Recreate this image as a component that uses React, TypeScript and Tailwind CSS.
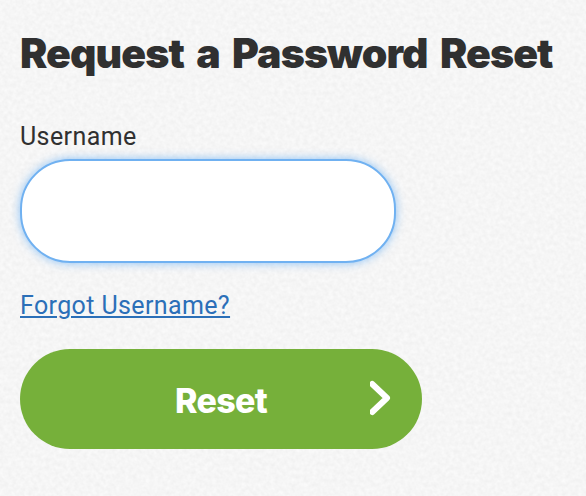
import { useState } from "react";

function PaperTexture() {
  return (
    <svg className="absolute inset-0 h-full w-full pointer-events-none" aria-hidden="true">
      <filter id="paper" x="0" y="0" width="100%" height="100%" colorInterpolationFilters="sRGB">
        <feTurbulence type="fractalNoise" baseFrequency="0.24" numOctaves="2" seed="7" />
        <feColorMatrix
          type="matrix"
          values="0.055 0 0 0 0.935  0.055 0 0 0 0.935  0.055 0 0 0 0.935  0 0 0 0 1"
        />
      </filter>
      <rect width="100%" height="100%" filter="url(#paper)" />
    </svg>
  );
}

export default function App() {
  const [username, setUsername] = useState("");

  return (
    <main className="relative h-screen overflow-hidden bg-[#f6f6f6] font-['Inter',sans-serif] text-[#303030]">
      <PaperTexture />

      <form className="relative flex flex-col items-start pl-5 pt-7" onSubmit={(e) => e.preventDefault()}>
        <h1 className="h-[52px] whitespace-nowrap text-[41px] font-black leading-[51px] tracking-[-0.9px] [word-spacing:5px]">
          Request a Password Reset
        </h1>

        <label
          htmlFor="username"
          className="mt-[41px] h-8 whitespace-nowrap font-['Roboto',sans-serif] text-[25px] leading-8 tracking-[0.4px]"
        >
          Username
        </label>
        <input
          id="username"
          type="text"
          value={username}
          onChange={(e) => setUsername(e.target.value)}
          className="mt-[6px] h-[104px] w-[376px] rounded-[50px] border-2 border-[#70b1f1] bg-white px-10 text-2xl shadow-[0_0_10px_rgba(90,168,245,0.7)] outline-none"
        />

        <a
          href="#"
          className="mt-[27px] h-8 whitespace-nowrap font-['Roboto',sans-serif] text-[25px] leading-8 tracking-[0.38px] text-[#2b6fb8] underline decoration-2 underline-offset-2"
        >
          Forgot Username?
        </a>

        <button
          type="submit"
          className="mt-[27px] flex h-[100px] w-[402px] items-center justify-end rounded-full bg-[#76b03a] pr-[30px] text-white"
        >
          <span className="mr-[103px] mt-1 whitespace-nowrap text-[34px] font-extrabold leading-10 tracking-[-0.7px]">
            Reset
          </span>
          <svg className="mb-0.5" width="22" height="36" viewBox="0 0 22 36" fill="none" aria-hidden="true">
            <path
              d="M2.2 4L17 18L2.2 32"
              stroke="currentColor"
              strokeWidth="6"
              strokeLinecap="round"
              strokeLinejoin="round"
            />
          </svg>
        </button>
      </form>
    </main>
  );
}
